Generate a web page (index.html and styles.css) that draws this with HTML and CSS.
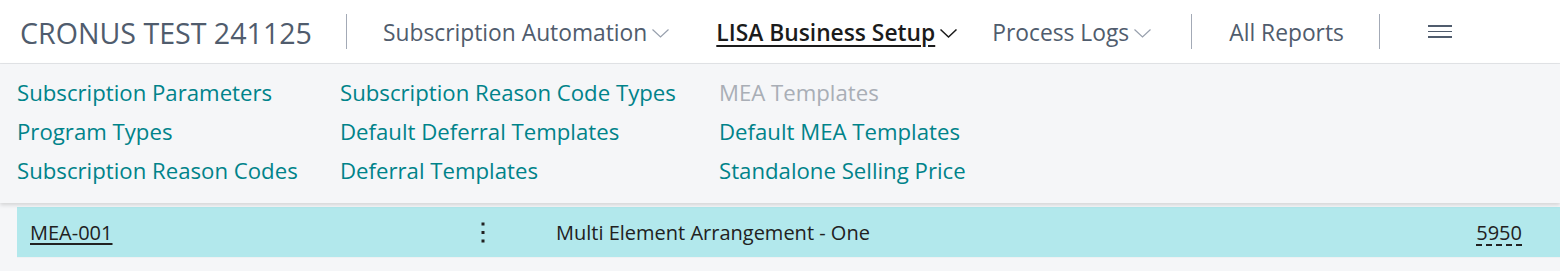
FILE: index.html
```html
<!DOCTYPE html>
<html lang="en">
  <head>
    <meta charset="UTF-8" />
    <title>CRONUS TEST 241125</title>
    <link rel="stylesheet" href="styles.css">
  </head>
  <body>
    <header class="topbar">
      <div class="company">CRONUS TEST 241125</div>
      <div class="sep"></div>
      <nav class="menu">
        <div class="menu-item">
          Subscription Automation
          <svg class="chev" viewBox="0 0 17 9"><polyline points="0.5,0.5 8.5,8 16.5,0.5" /></svg>
        </div>
        <div class="menu-item active">
          <span class="label">LISA Business Setup</span>
          <svg class="chev" viewBox="0 0 17 9"><polyline points="0.5,0.5 8.5,8 16.5,0.5" /></svg>
        </div>
        <div class="menu-item">
          Process Logs
          <svg class="chev" viewBox="0 0 17 9"><polyline points="0.5,0.5 8.5,8 16.5,0.5" /></svg>
        </div>
      </nav>
      <div class="sep"></div>
      <div class="menu-item reports">All Reports</div>
      <div class="sep"></div>
      <div class="hamburger">
        <span></span><span></span><span></span>
      </div>
    </header>

    <!-- dropdown of LISA Business Setup -->
    <section class="dropdown">
      <div class="col">
        <a>Subscription Parameters</a>
        <a>Program Types</a>
        <a>Subscription Reason Codes</a>
      </div>
      <div class="col">
        <a>Subscription Reason Code Types</a>
        <a>Default Deferral Templates</a>
        <a>Deferral Templates</a>
      </div>
      <div class="col">
        <a class="disabled">MEA Templates</a>
        <a>Default MEA Templates</a>
        <a>Standalone Selling Price</a>
      </div>
    </section>

    <div class="list">
      <div class="row">
        <span class="code">MEA-001</span>
        <span class="dots">
          <svg width="4" height="21" viewBox="0 0 4 21">
            <rect x="0.5" y="0.5" width="3" height="3" />
            <rect x="0.5" y="9" width="3" height="3" />
            <rect x="0.5" y="17.5" width="3" height="3" />
          </svg>
        </span>
        <span class="desc">Multi Element Arrangement - One</span>
        <span class="amount">5950</span>
      </div>
    </div>
  </body>
</html>
```

FILE: styles.css
```css
* {
  box-sizing: border-box;
}

body {
  margin: 0;
  font-family: "Open Sans", "Noto Sans", sans-serif;
  background-color: #f5f6f8;
}

.topbar {
  display: flex;
  align-items: center;
  height: 64px;
  padding: 2px 0 0 20px;
  background: #fff;
  border-bottom: 1px solid #e3e5e8;
  color: #505c6d;
}

.company {
  font-size: 28.6px;
  margin-right: 34px;
}

.sep {
  width: 1px;
  height: 35px;
  margin-top: -2px;
  background: #a3aab6;
}

.menu {
  display: flex;
  margin-left: 36px;
  margin-right: 40px;
}

.menu-item {
  font-size: 22.8px;
  display: flex;
  align-items: center;
  white-space: nowrap;
}

.menu-item.active {
  color: #1b1b1b;
  font-weight: 600;
  margin: 0 35px 0 47px;
}

.menu-item.active .label {
  text-decoration: underline;
  text-underline-offset: 4px;
  text-decoration-thickness: 2px;
}

.chev {
  width: 17px;
  height: 9px;
  margin-left: 5px;
  margin-top: 2px;
  fill: none;
  stroke: #98a0ad;
  stroke-width: 1.2;
}

.menu-item.active .chev {
  stroke: #1b1b1b;
  stroke-width: 1.5;
}

.reports {
  margin: 0 35px 0 37px;
}

.hamburger {
  display: flex;
  flex-direction: column;
  gap: 4px;
  margin: -2px 0 0 48px;
}

.hamburger span {
  width: 24px;
  height: 1.5px;
  background: #505c6d;
}

.dropdown {
  display: grid;
  grid-template-columns: 323px 379px auto;
  padding: 9px 0 13px 17px;
  background: #f5f6f8;
  box-shadow: 0 2px 4px rgba(0, 0, 0, 0.14);
  position: relative;
}

.col {
  display: flex;
  flex-direction: column;
}

.col a {
  color: #00838a;
  font-size: 22.2px;
  line-height: 39px;
  white-space: nowrap;
  cursor: pointer;
}

.col a.disabled {
  color: #a9aeb6;
}

.list {
  padding: 4px 0 0 17px;
}

.row {
  display: flex;
  align-items: center;
  height: 51px;
  padding-top: 1px;
  background: #b2e8ec;
  color: #212121;
  font-size: 20px;
  border-bottom: 1px solid #eef1f3;
}

.code {
  width: 463px;
  padding-left: 13px;
  text-decoration: underline;
  text-underline-offset: 3px;
  text-decoration-thickness: 2px;
}

.dots {
  width: 76px;
  display: flex;
  padding-left: 1px;
}

.dots svg {
  fill: #212121;
}

.desc {
  flex: 1;
}

.amount {
  margin-right: 38px;
  text-decoration: underline dashed;
  text-underline-offset: 4px;
}
```
